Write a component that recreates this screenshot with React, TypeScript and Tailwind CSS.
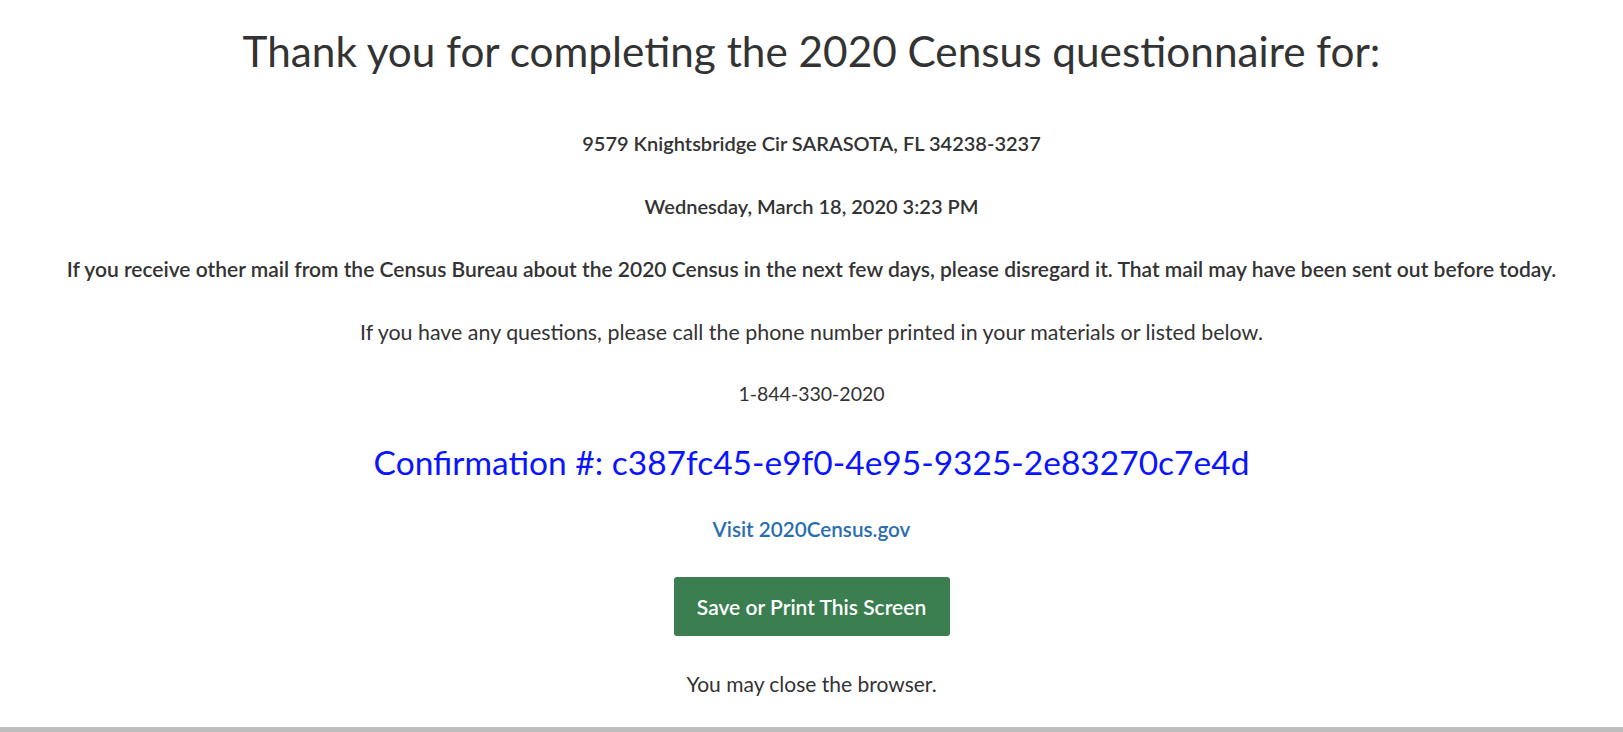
export default function App() {
  return (
    <div
      className="w-full min-h-screen bg-white flex flex-col items-center text-center text-[#333333]"
      style={{ fontFamily: "Lato, 'Open Sans', sans-serif" }}
    >
      {/* Heading */}
      <h1 className="mt-[21px] text-[42.3px] leading-[60px] font-normal">
        Thank you for completing the 2020 Census questionnaire for:
      </h1>

      {/* Details */}
      <p className="mt-[48px] text-[20px] leading-[28px] font-semibold">
        9579 Knightsbridge Cir SARASOTA, FL 34238-3237
      </p>
      <p className="mt-[35px] text-[20px] leading-[28px] font-semibold">
        Wednesday, March 18, 2020 3:23 PM
      </p>
      <p className="mt-[35px] text-[21px] leading-[28px] font-semibold whitespace-nowrap">
        If you receive other mail from the Census Bureau about the 2020 Census in the next few days, please
        disregard it. That mail may have been sent out before today.
      </p>
      <p className="mt-[35px] text-[21.4px] leading-[28px]">
        If you have any questions, please call the phone number printed in your materials or listed below.
      </p>
      <p className="mt-[34px] text-[19.5px] leading-[28px]">1-844-330-2020</p>

      {/* Confirmation */}
      <p className="mt-[32px] text-[33.5px] leading-[44px] text-[#0a14ff]">
        Confirmation #: c387fc45-e9f0-4e95-9325-2e83270c7e4d
      </p>

      <a href="#" className="mt-[31px] text-[20.7px] leading-[28px] font-semibold text-[#2a6eb0]">
        Visit 2020Census.gov
      </a>

      {/* CTA */}
      <button className="mt-[34px] w-[276px] h-[59px] rounded-[3px] bg-[#3b7f50] text-white text-[21px] font-semibold">
        Save or Print This Screen
      </button>

      <p className="mt-[34px] text-[21px] leading-[28px]">You may close the browser.</p>

      <div className="mt-auto w-full h-[5px] bg-[#bdbdbd]" />
    </div>
  );
}
